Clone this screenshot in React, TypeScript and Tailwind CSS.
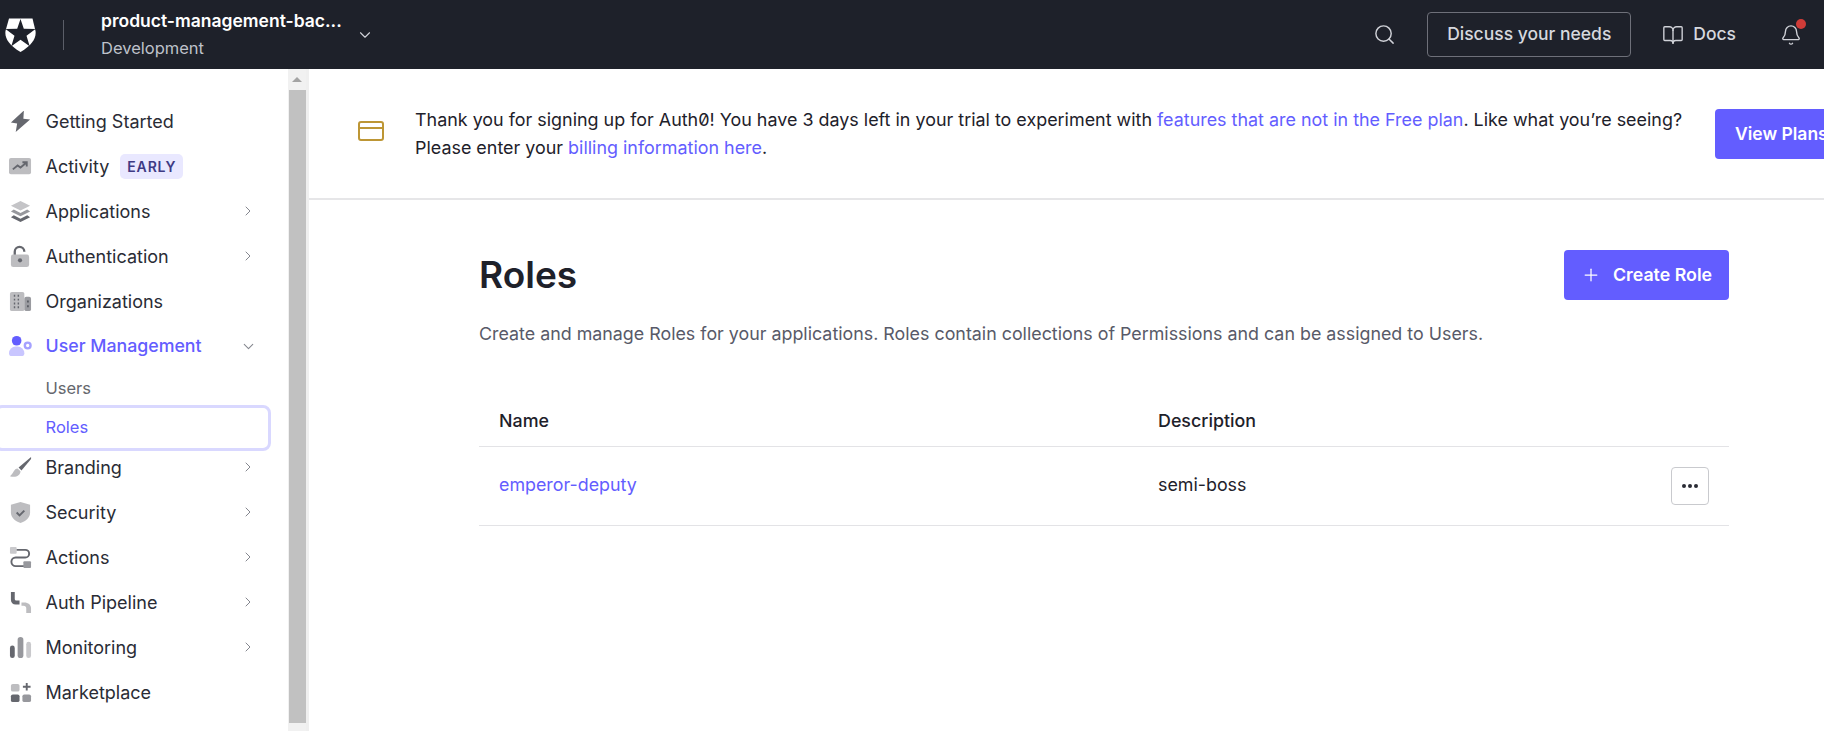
import { ChevronDown, ChevronRight, Search, BookOpen, Bell, Plus } from "lucide-react";
import type { ReactNode } from "react";

const navTop: { label: string; icon: ReactNode; arrow?: boolean; badge?: string }[] = [
  {
    label: "Getting Started",
    icon: <path d="M15 1 2 13l6.500 1L7 23l15-13-7-1 .5-8H15Z" fill="#65676e" />,
  },
  {
    label: "Activity",
    badge: "EARLY",
    icon: (
      <>
        <rect x="0" y="3" width="23" height="17" rx="2" fill="#bdbdc0" />
        <path d="m4 15 5-4 3 2 6-5M14 7.500h4.500V12" fill="none" stroke="#65676e" strokeWidth="2" />
      </>
    ),
  },
  {
    label: "Applications",
    arrow: true,
    icon: (
      <>
        <path d="M12 1 22 6l-10 5L2 6l10-5Z" fill="#c4c4c7" />
        <path d="m5 10 7 3.500 7-3.500 3 2-10 5-10-5 3-2Z" fill="#97989d" />
        <path d="m5 16 7 3.500 7-3.500 3 2-10 5-10-5 3-2Z" fill="#65676e" />
      </>
    ),
  },
  {
    label: "Authentication",
    arrow: true,
    icon: (
      <>
        <path d="M6 11V7a5 5 0 0 1 10 0" fill="none" stroke="#65676e" strokeWidth="2.400" />
        <rect x="2" y="10" width="19" height="13" rx="2.500" fill="#bdbdc0" />
        <circle cx="11.500" cy="16" r="2.200" fill="#65676e" />
      </>
    ),
  },
  {
    label: "Organizations",
    icon: (
      <>
        <rect x="1" y="2" width="15" height="20" rx="2" fill="#bdbdc0" />
        <rect x="16" y="7" width="7" height="15" rx="2" fill="#9a9ba0" />
        <path d="M5 6h1.500M9 6h1.500M5 10h1.500M9 10h1.500M5 14h1.500M9 14h1.500M5 18h1.500M9 18h1.500" stroke="#65676e" strokeWidth="2" />
        <path d="M19 12h1.500M19 17h1.500" stroke="#4a4c54" strokeWidth="2" />
      </>
    ),
  },
];

const navBottom: { label: string; icon: ReactNode; arrow?: boolean }[] = [
  {
    label: "Branding",
    arrow: true,
    icon: (
      <>
        <path d="M23 1 10 12l3 3L23 3V1Z" fill="#65676e" />
        <path d="M9 13c-4 0-4 5-8 8 5 2 11 0 11-5l-3-3Z" fill="#bdbdc0" />
      </>
    ),
  },
  {
    label: "Security",
    arrow: true,
    icon: (
      <>
        <path d="M12 1 22 4v8c0 6-5 9-10 11C7 21 2 18 2 12V4l10-3Z" fill="#bdbdc0" />
        <path d="m8 12 3 3 5-5" fill="none" stroke="#65676e" strokeWidth="2" />
      </>
    ),
  },
  {
    label: "Actions",
    arrow: true,
    icon: (
      <>
        <rect x="1" y="1" width="7" height="7" rx="1" fill="#c9c9cc" />
        <path d="M8 4h9a4 4 0 0 1 0 8H7a4.500 4.500 0 0 0 0 9h9" fill="none" stroke="#65676e" strokeWidth="2" />
        <rect x="15" y="16" width="8" height="7" rx="1" fill="#97989d" />
      </>
    ),
  },
  {
    label: "Auth Pipeline",
    arrow: true,
    icon: (
      <>
        <path d="M2 1h4v7c0 1.500 1 2 2 2h3v4H7c-3 0-5-2-5-5V1Z" fill="#65676e" />
        <path d="M13 12h3c4 0 7 2.500 7 6v5h-5v-5c0-1.500-1-2.500-3-2.500h-2V12Z" fill="#bdbdc0" />
      </>
    ),
  },
  {
    label: "Monitoring",
    arrow: true,
    icon: (
      <>
        <rect x="1" y="10" width="5" height="13" rx="2.500" fill="#65676e" />
        <rect x="9" y="1" width="6" height="22" rx="3" fill="#97989d" />
        <rect x="18" y="6" width="5" height="17" rx="2.500" fill="#c9c9cc" />
      </>
    ),
  },
  {
    label: "Marketplace",
    icon: (
      <>
        <rect x="2" y="3" width="9" height="8" rx="2" fill="#bdbdc0" />
        <rect x="2" y="14" width="9" height="8" rx="2" fill="#65676e" />
        <rect x="14" y="14" width="9" height="8" rx="2" fill="#97989d" />
        <path d="M18.500 2v8M14.500 6h8" stroke="#65676e" strokeWidth="2" />
      </>
    ),
  },
  {
    label: "Extensions",
    icon: <path d="M6 2v20M16 2v20M2 7h20M2 17h20" stroke="#bdbdc0" strokeWidth="2" />,
  },
];

function NavIcon({ children }: { children: ReactNode }) {
  return (
    <svg viewBox="0 0 24 24" className="w-[23px] h-[23px] shrink-0">
      {children}
    </svg>
  );
}

function NavRow({
  label,
  icon,
  arrow,
  badge,
}: {
  label: string;
  icon: ReactNode;
  arrow?: boolean;
  badge?: string;
}) {
  return (
    <div className="h-[45px] last:mt-[3px] flex items-center pl-[9px] pr-[32px] shrink-0">
      <NavIcon>{icon}</NavIcon>
      <span className="ml-[13.500px] text-[#2a2c35] text-[18px] whitespace-nowrap">{label}</span>
      {badge && (
        <span className="ml-[11px] h-[25px] px-[7px] flex items-center rounded-[5px] bg-[#e9e8ff] text-[#3e3a84] text-[14px] font-semibold tracking-[0.06em]">
          {badge}
        </span>
      )}
      {arrow && <ChevronRight className="ml-auto text-[#85878f]" size={16} strokeWidth={1.5} />}
    </div>
  );
}

function Sidebar() {
  return (
    <aside className="w-[309px] shrink-0 flex border-r-[3px] border-[#efefef] overflow-hidden">
      <nav className="w-[288px] shrink-0 flex flex-col pt-[29.500px] overflow-hidden">
        {navTop.map((n) => (
          <NavRow key={n.label} {...n} />
        ))}
        <div className="h-[45px] flex items-center pl-[9px] pr-[31px] pt-[1px] shrink-0">
          <NavIcon>
            <circle cx="8" cy="6" r="5" fill="#635dff" />
            <path d="M0 19a7 7 0 0 1 7-7h2a7 7 0 0 1 7 7 3 3 0 0 1-3 3H3a3 3 0 0 1-3-3Z" fill="#c9c6ff" />
            <circle cx="19.500" cy="11" r="3" fill="none" stroke="#a5a1ff" strokeWidth="2.500" />
          </NavIcon>
          <span className="ml-[13.500px] text-[#635dff] text-[17.750px] font-medium whitespace-nowrap">User Management</span>
          <ChevronDown className="ml-auto text-[#85878f]" size={17} strokeWidth={1.5} />
        </div>
        <div className="h-[36px] flex items-center pl-[45.500px] pt-[4px] text-[16.500px] text-[#65676e] shrink-0">Users</div>
        <div className="h-[46px] -ml-[6px] mr-[17px] flex items-center pl-[48.500px] pb-[1px] rounded-[8px] border-[3px] border-[#d9d8ff] text-[16.500px] text-[#635dff] shrink-0">
          Roles
        </div>
        <div className="-mt-[6px] flex flex-col">
          {navBottom.map((n) => (
            <NavRow key={n.label} {...n} />
          ))}
        </div>
      </nav>
      <div className="w-[18px] shrink-0 flex flex-col bg-[#f1f1f1]">
        <div className="h-[21px] shrink-0 flex items-center justify-center">
          <div className="w-0 h-0 border-x-[5px] border-x-transparent border-b-[5px] border-b-[#a3a3a3]" />
        </div>
        <div className="h-[633px] shrink-0 ml-[1px] bg-[#c1c1c1]" />
      </div>
    </aside>
  );
}

function Header() {
  return (
    <header className="h-[69px] shrink-0 bg-[#1e212a] flex items-center">
      <svg viewBox="5 16 31 35" className="w-[31px] h-[35px] ml-[5px] shrink-0 -mt-[1px]">
        <path d="M9 17.500h23.500L35.500 30C36.500 37 32 44 20.500 51 9 44 4.500 37 5.500 30L9 17.500Z" fill="#ffffff" />
        <path
          d="M20.500 18l3.300 9.800 11.700.2-9 6.800 3.200 10.500-9.200-6.600-9.200 6.600 3.200-10.500-9-6.800 11.700-.2L20.500 18Z"
          fill="#1e212a"
        />
      </svg>
      <div className="ml-[27px] w-px h-[30px] bg-[#5b5e68]" />
      <div className="ml-[37px] flex flex-col">
        <span className="text-white text-[17.500px] font-semibold leading-[22px]">product-management-bac...</span>
        <span className="text-[#bfc2cb] text-[16.500px] leading-[22px] mt-[5px]">Development</span>
      </div>
      <ChevronDown className="ml-[14px] text-[#d0d2d8]" size={18} strokeWidth={1.5} />
      <Search className="ml-auto text-[#d0d2d8]" size={23} strokeWidth={1.5} />
      <div className="ml-[31px] h-[45px] w-[204px] flex items-center justify-center rounded-[4px] border border-[#6e7079] text-[#d6d8de] text-[17.500px] font-medium">
        Discuss your needs
      </div>
      <BookOpen className="ml-[31px] text-[#d0d2d8]" size={22} strokeWidth={1.5} />
      <span className="ml-[9px] text-[#d6d8de] text-[17.500px] font-medium">Docs</span>
      <div className="relative ml-[44px] mr-[22px]">
        <Bell className="text-[#d0d2d8]" size={22} strokeWidth={1.5} />
        <span className="absolute -top-[5px] left-[16px] w-[10px] h-[10px] rounded-full bg-[#d03c38]" />
      </div>
    </header>
  );
}

function Banner() {
  return (
    <div className="h-[131px] shrink-0 border-b-2 border-[#e6e6e8] flex items-start overflow-hidden">
      <svg viewBox="0 0 26 20" className="w-[26px] h-[20px] ml-[49px] mt-[52px] shrink-0" fill="none" stroke="#bd9635" strokeWidth="2">
        <rect x="1" y="1" width="24" height="18" rx="2" />
        <path d="M1 7h24" />
      </svg>
      <p className="ml-[31px] mt-[37px] w-[1290px] shrink-0 text-[17.920px] leading-[28px] text-[#1e212a]">
        Thank you for signing up for Auth<span className="[font-feature-settings:'zero']">0</span>! You have 3 days left
        in your trial to experiment with <a className="text-[#635dff]">features that are not in the Free plan</a>. Like
        what you’re seeing? Please enter your <a className="text-[#635dff]">billing information here</a>.
      </p>
      <button className="ml-[10px] mt-[40px] w-[120px] h-[50px] shrink-0 rounded-[4px] bg-[#635dff] text-white text-[17.500px] font-semibold text-left pl-[20px] whitespace-nowrap">
        View Plans
      </button>
    </div>
  );
}

export default function App() {
  return (
    <div
      className="h-[731px] w-[1824px] flex flex-col overflow-hidden bg-white"
      style={{ fontFamily: "Inter, sans-serif" }}
    >
      <Header />
      <div className="flex flex-1 min-h-0">
        <Sidebar />
        <main className="flex-1 min-w-0 flex flex-col overflow-hidden">
          <Banner />
          <section className="ml-[170px] w-[1250px] pt-[50px]">
            <div className="flex items-center justify-between h-[50px]">
              <h1 className="text-[37px] font-semibold text-[#1e212a] leading-none pb-[2px]">Roles</h1>
              <button className="h-[50px] w-[165px] rounded-[4px] bg-[#635dff] text-white text-[17.800px] font-semibold flex items-center justify-center gap-[12px]">
                <Plus size={20} strokeWidth={1.5} />
                Create Role
              </button>
            </div>
            <p className="mt-[21px] text-[17.850px] leading-[26px] text-[#585a68] whitespace-nowrap">
              Create and manage Roles for your applications. Roles contain collections of Permissions and can be assigned to Users.
            </p>
            <div className="mt-[49px] flex items-center h-[51px] border-b border-[#e3e3e6] text-[17.850px] font-medium text-[#1e212a] pl-[20px]">
              <div className="w-[659px]">Name</div>
              <div>Description</div>
            </div>
            <div className="flex items-center h-[79px] border-b border-[#e3e3e6] text-[17.850px] pl-[20px] pr-[20px]">
              <a className="w-[659px] pb-[1px] text-[#635dff]">emperor-deputy</a>
              <div className="pb-[1px] text-[#1e212a]">semi-boss</div>
              <button className="ml-auto w-[38px] h-[38px] rounded-[4px] border border-[#c9cace] flex items-center justify-center gap-[2px]">
                <span className="w-[4px] h-[4px] rounded-full bg-[#2a2c35]" />
                <span className="w-[4px] h-[4px] rounded-full bg-[#2a2c35]" />
                <span className="w-[4px] h-[4px] rounded-full bg-[#2a2c35]" />
              </button>
            </div>
          </section>
        </main>
      </div>
    </div>
  );
}
